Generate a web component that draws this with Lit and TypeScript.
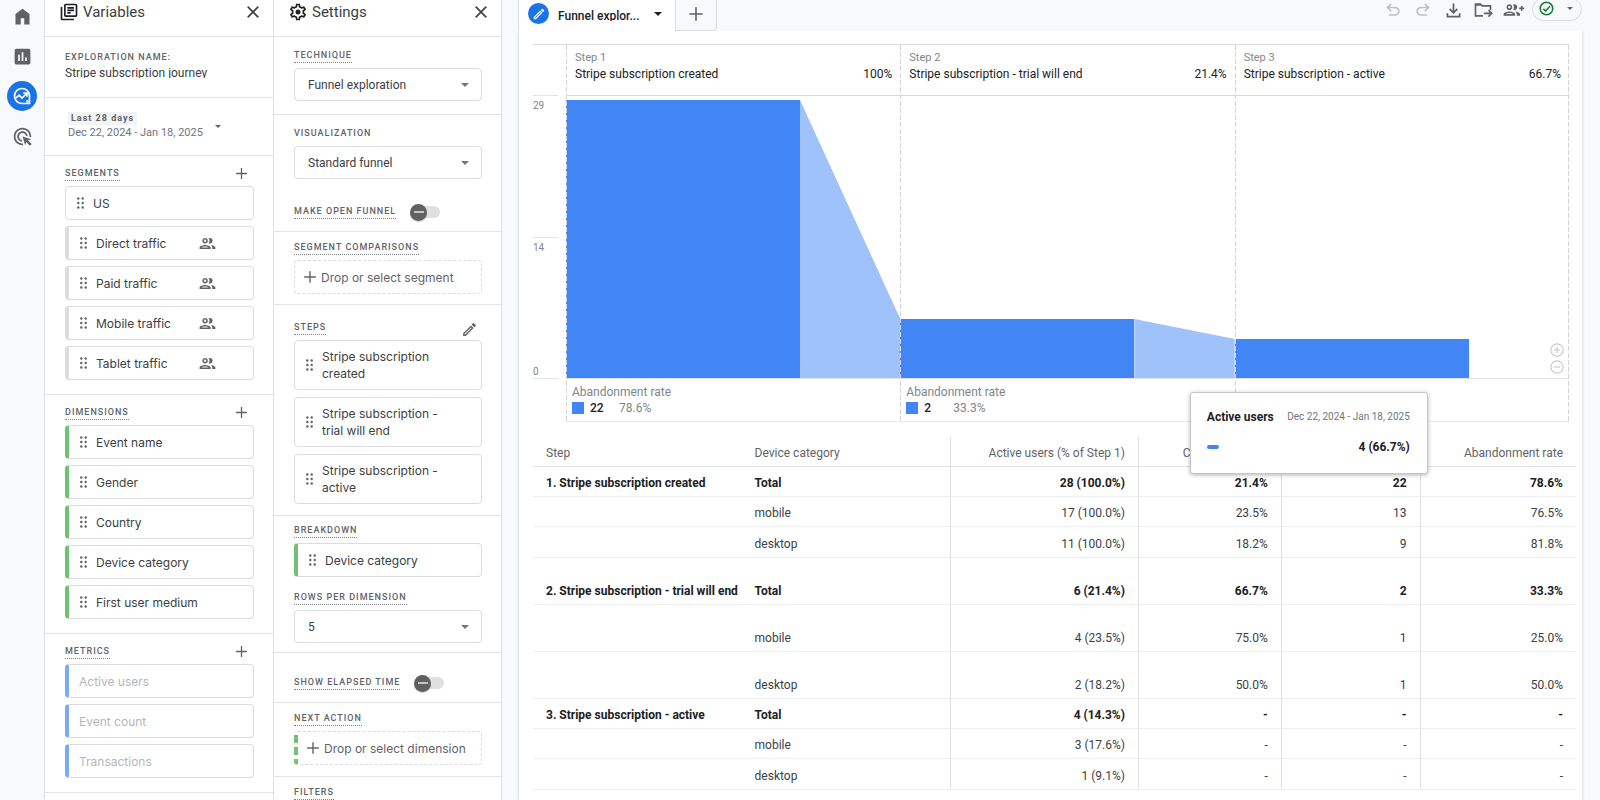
import { LitElement, html, svg, css, nothing } from "lit";
import { customElement, property, state } from "lit/decorators.js";
import { classMap } from "lit/directives/class-map.js";

const P = {
  home: "M4 21V9l8-6 8 6v12h-6v-7h-4v7z",
  reports:
    "M19 3H5c-1.1 0-2 .9-2 2v14c0 1.1.9 2 2 2h14c1.1 0 2-.9 2-2V5c0-1.1-.9-2-2-2zM9 17H7v-7h2v7zm4 0h-2V7h2v10zm4 0h-2v-4h2v4z",
  ads: "M11.71 17.99C8.53 17.84 6 15.22 6 12c0-3.31 2.69-6 6-6 3.22 0 5.84 2.53 5.99 5.71l-2.1-.63C15.48 9.31 13.89 8 12 8c-2.21 0-4 1.79-4 4 0 1.89 1.31 3.48 3.08 3.89l.63 2.1zM22 12c0 .3-.01.6-.04.9l-1.97-.59c.01-.1.01-.21.01-.31 0-4.42-3.58-8-8-8s-8 3.58-8 8 3.58 8 8 8c.1 0 .21 0 .31-.01l.59 1.97c-.3.03-.6.04-.9.04-5.52 0-10-4.48-10-10S6.48 2 12 2s10 4.48 10 10zm-3.77 4.26L22 15l-10-3 3 10 1.26-3.77 4.27 4.27 1.98-1.98-4.28-4.26z",
  library:
    "M4 6H2v14c0 1.1.9 2 2 2h14v-2H4V6zm16-4H8c-1.1 0-2 .9-2 2v12c0 1.1.9 2 2 2h12c1.1 0 2-.9 2-2V4c0-1.1-.9-2-2-2zm0 14H8V4h12v12zM10 9h8v2h-8zm0 3h4v2h-4zm0-6h8v2h-8z",
  gear: "M19.43 12.98c.04-.32.07-.64.07-.98 0-.34-.03-.66-.07-.98l2.11-1.65c.19-.15.24-.42.12-.64l-2-3.46c-.09-.16-.26-.25-.44-.25-.06 0-.12.01-.17.03l-2.49 1c-.52-.4-1.08-.73-1.69-.98l-.38-2.65C14.46 2.18 14.25 2 14 2h-4c-.25 0-.46.18-.49.42l-.38 2.65c-.61.25-1.17.59-1.69.98l-2.49-1c-.06-.02-.12-.03-.18-.03-.17 0-.34.09-.43.25l-2 3.46c-.13.22-.07.49.12.64l2.11 1.65c-.04.32-.07.65-.07.98 0 .33.03.66.07.98l-2.11 1.65c-.19.15-.24.42-.12.64l2 3.46c.09.16.26.25.44.25.06 0 .12-.01.17-.03l2.49-1c.52.4 1.08.73 1.69.98l.38 2.65c.03.24.24.42.49.42h4c.25 0 .46-.18.49-.42l.38-2.65c.61-.25 1.17-.59 1.69-.98l2.49 1c.06.02.12.03.18.03.17 0 .34-.09.43-.25l2-3.46c.12-.22.07-.49-.12-.64l-2.11-1.65zm-1.98-1.71c.04.31.05.52.05.73 0 .21-.02.43-.05.73l-.14 1.13.89.7 1.08.84-.7 1.21-1.27-.51-1.04-.42-.9.68c-.43.32-.84.56-1.25.73l-1.06.43-.16 1.13-.2 1.35h-1.4l-.19-1.35-.16-1.13-1.06-.43c-.43-.18-.83-.41-1.23-.71l-.91-.7-1.06.43-1.27.51-.7-1.21 1.08-.84.89-.7-.14-1.13c-.03-.31-.05-.54-.05-.74s.02-.43.05-.73l.14-1.13-.89-.7-1.08-.84.7-1.21 1.27.51 1.04.42.9-.68c.43-.32.84-.56 1.25-.73l1.06-.43.16-1.13.2-1.35h1.39l.19 1.35.16 1.13 1.06.43c.43.18.83.41 1.23.71l.91.7 1.06-.43 1.27-.51.7 1.21-1.07.85-.89.7.14 1.13zM12 9a3 3 0 1 0 0 6 3 3 0 0 0 0-6z",
  people:
    "M9 13.75c-2.34 0-7 1.17-7 3.5V19h14v-1.75c0-2.33-4.66-3.5-7-3.5zM4.34 17c.84-.58 2.87-1.25 4.66-1.25s3.82.67 4.66 1.25H4.34zM9 12c1.93 0 3.5-1.57 3.5-3.5S10.93 5 9 5 5.5 6.57 5.5 8.5 7.07 12 9 12zm0-5c.83 0 1.5.67 1.5 1.5S9.83 10 9 10s-1.5-.67-1.5-1.5S8.17 7 9 7zm7.04 6.81c1.16.84 1.96 1.96 1.96 3.44V19h4v-1.75c0-2.02-3.5-3.17-5.96-3.44zM15 12c1.93 0 3.5-1.57 3.5-3.5S16.93 5 15 5c-.54 0-1.04.13-1.5.35.63.89 1 1.98 1 3.15s-.37 2.26-1 3.15c.46.22.96.35 1.5.35z",
  edit: "M14.06 9.02l.92.92L5.92 19H5v-.92l9.06-9.06M17.66 3c-.25 0-.51.1-.7.29l-1.83 1.83 3.75 3.75 1.83-1.83c.39-.39.39-1.02 0-1.41l-2.34-2.34c-.2-.2-.45-.29-.71-.29zm-3.6 3.19L3 17.25V21h3.75L17.81 9.94l-3.75-3.75z",
  undo: "M7 19v-2h7.1c2.1 0 3.9-1.5 3.9-3.5S16.2 10 14.1 10H7.8l2.6 2.6L9 14 4 9l5-5 1.4 1.4L7.8 8h6.3c3.3 0 5.9 2.4 5.9 5.5S17.4 19 14.1 19z",
  redo: "M17 19v-2H9.9C7.8 17 6 15.5 6 13.5S7.8 10 9.9 10h6.3l-2.6 2.6L15 14l5-5-5-5-1.4 1.4L16.2 8H9.9C6.6 8 4 10.4 4 13.5S6.6 19 9.9 19z",
  download: "M12 16l-5-5 1.4-1.45 2.6 2.6V4h2v8.15l2.6-2.6L17 11zM4 20v-5h2v3h12v-3h2v5z",
};

const icon = (d: string, size: number) =>
  html`<svg width=${size} height=${size} viewBox="0 0 24 24" fill="currentColor" aria-hidden="true"><path d=${d}></path></svg>`;

const line = (body: unknown, size: number, width = 2) =>
  html`<svg width=${size} height=${size} viewBox="0 0 24 24" fill="none" stroke="currentColor" stroke-width=${width} aria-hidden="true">${body}</svg>`;

const plus = (size: number) => line(svg`<path d="M12 2v20M2 12h20"></path>`, size, 2.4);
const cross = line(svg`<path d="M4 4l16 16M20 4L4 20"></path>`, 16, 2.4);
const caret = (w = 8) =>
  html`<svg class="caret" width=${w} height=${w / 2} viewBox="0 0 8 4" fill="currentColor" aria-hidden="true"><path d="M0 0h8L4 4z"></path></svg>`;
const grip = html`<svg class="grip" width="7" height="12" viewBox="0 0 7 12" fill="#5f6368" aria-hidden="true">
  ${[1.5, 6, 10.5].map((y) => svg`<circle cx="1.3" cy=${y} r="1.2"></circle><circle cx="5.7" cy=${y} r="1.2"></circle>`)}
</svg>`;

const base = css`
  * { box-sizing: border-box; }
  button, input, select { font: inherit; color: inherit; margin: 0; padding: 0; border: 0; background: none; outline: 0; }
  button { cursor: pointer; }
  svg { display: block; flex: none; }
  h1, h2, h3, p { margin: 0; font-weight: 400; }
`;

const panel = css`
  :host { display: flex; flex-direction: column; background: #fff; border-right: 1px solid #dfe1e4; overflow: hidden; min-height: 0; }
  .head { display: flex; align-items: center; flex: none; height: 37px; padding: 0 12px 12px 14px; border-bottom: 1px solid #e2e3e5; }
  .head svg { color: #202124; }
  .head .x svg { color: #3c4043; }
  .head h2 { flex: 1; padding-left: 4px; font-size: 15px; line-height: 24px; color: #3c4043; }
  section { flex: none; padding: 11px 19px 14px 20px; border-bottom: 1px solid #e2e3e5; }
  .row { display: flex; align-items: flex-start; justify-content: space-between; height: 14px; margin-bottom: 5px; }
  .cap { display: block; width: max-content; height: 14px; font-size: 9px; line-height: 12px; font-weight: 500; letter-spacing: 1px; text-transform: uppercase; color: #5f6368; }
  .dot { border-bottom: 1px dotted #80868b; }
  .row button { color: #5f6368; padding-right: 6px; }
  .chips { display: grid; gap: 6px; }
`;

@customElement("field-chip")
class FieldChip extends LitElement {
  @property() label = "";
  @property() tone = "";
  @property({ type: Boolean }) people = false;
  @property({ type: Boolean }) disabled = false;
  @property({ type: Boolean }) tall = false;
  @property({ type: Boolean }) drop = false;

  static styles = [
    base,
    css`
      :host { display: block; }
      button { display: flex; align-items: center; gap: 9px; width: 100%; min-height: 34px; padding: 0 36px 0 11px; border: 1px solid #dadce0; border-radius: 4px; background: #fff; font-family: Inter, Roboto, sans-serif; font-size: 12px; line-height: 17px; color: #3c4043; text-align: left; }
      .grey { border-left: 4px solid #dadce0; }
      .green { border-left: 4px solid #71c174; }
      .blue { border-left: 4px solid #7baaf7; }
      .tall { min-height: 50px; padding: 7px 36px 7px 11px; }
      .off { padding-left: 10px; color: #b4b7ba; }
      .drop { gap: 4px; padding: 0 8px; border-style: dashed; color: #5f6368; white-space: nowrap; }
      .people { margin-left: auto; color: #5f6368; }
    `,
  ];

  render() {
    const cls = { grey: this.tone === "grey", green: this.tone === "green", blue: this.tone === "blue", tall: this.tall, off: this.disabled, drop: this.drop };
    return html`<button class=${classMap(cls)} ?disabled=${this.disabled}>
      ${this.drop ? plus(14) : this.disabled ? nothing : grip}
      <span>${this.label}</span>
      ${this.people ? html`<span class="people">${icon(P.people, 19)}</span>` : nothing}
    </button>`;
  }
}

@customElement("variables-panel")
class VariablesPanel extends LitElement {
  static styles = [
    base,
    panel,
    css`
      .name { padding: 14px 19px 19px 20px; }
      .name .cap { height: 12px; margin-bottom: 3px; }
      .clip { height: 12px; overflow: hidden; }
      .clip input { display: block; width: 100%; height: 14px; line-height: 14px; font-size: 12px; color: #3c4043; }
      .period { padding: 14px 19px 15px 23px; }
      .period button { display: flex; align-items: center; gap: 12px; text-align: left; color: #5f6368; }
      .badge { display: block; width: max-content; padding: 0 3px; background: #f1f3f4; font-size: 9px; line-height: 13px; font-weight: 700; letter-spacing: 1px; }
      .dates { display: block; padding-top: 1px; font-size: 11px; line-height: 14px; color: #70757a; }
    `,
  ];

  private group(title: string, tone: string, items: string[]) {
    return html`<section>
      <div class="row"><h3 class="cap dot">${title}</h3><button aria-label="Add ${title}">${plus(13)}</button></div>
      <div class="chips">
        ${items.map((t) => html`<field-chip label=${t} tone=${t === "US" ? "" : tone} ?people=${tone === "grey" && t !== "US"} ?disabled=${tone === "blue"}></field-chip>`)}
      </div>
    </section>`;
  }

  render() {
    return html`
      <header class="head">${icon(P.library, 20)}<h2>Variables</h2><button class="x" aria-label="Close variables">${cross}</button></header>
      <section class="name">
        <label class="cap" for="name">Exploration name:</label>
        <div class="clip"><input id="name" type="text" value="Stripe subscription journey" /></div>
      </section>
      <section class="period">
        <button><span><span class="badge">Last 28 days</span><span class="dates">Dec 22, 2024 - Jan 18, 2025</span></span>${caret(6)}</button>
      </section>
      ${this.group("Segments", "grey", ["US", "Direct traffic", "Paid traffic", "Mobile traffic", "Tablet traffic"])}
      ${this.group("Dimensions", "green", ["Event name", "Gender", "Country", "Device category", "First user medium"])}
      ${this.group("Metrics", "blue", ["Active users", "Event count", "Transactions"])}
    `;
  }
}

@customElement("settings-panel")
class SettingsPanel extends LitElement {
  static styles = [
    base,
    panel,
    css`
      .cap { margin-bottom: 5px; }
      .row .cap, .toggle .cap { margin-bottom: 0; }
      .row button { padding-right: 4px; }
      .pick { display: grid; align-items: center; color: #3c4043; }
      .pick select { grid-area: 1 / 1; width: 100%; height: 33px; padding: 0 13px; border: 1px solid #dadce0; border-radius: 4px; appearance: none; font-size: 12px; background: #fff; }
      .pick .caret { grid-area: 1 / 1; justify-self: end; margin-right: 13px; color: #757575; pointer-events: none; }
      .chips { gap: 7px; }
      .toggle { display: flex; align-items: center; gap: 14px; height: 18px; }
      .toggle input { display: grid; align-items: center; width: 30px; height: 18px; appearance: none; }
      .toggle input::before { content: ""; grid-area: 1 / 1; justify-self: end; width: 28px; height: 12px; border-radius: 6px; background: #e0e0e0; }
      .toggle input::after { content: ""; grid-area: 1 / 1; width: 17px; height: 17px; border-radius: 50%; background: linear-gradient(#c4c4c4, #c4c4c4) center / 10px 2px no-repeat #616161; box-shadow: 0 1px 1px rgba(0, 0, 0, 0.2); }
      .technique { padding-top: 12px; padding-bottom: 13px; }
      .visual { padding-top: 12px; padding-bottom: 10px; }
      .visual .toggle { margin-top: 24px; }
      .compare { padding-top: 9px; padding-bottom: 10px; }
      .steps { padding-top: 16px; padding-bottom: 11px; }
      .breakdown { padding-top: 8px; padding-bottom: 9px; }
      .breakdown field-chip { margin-bottom: 14px; }
      .elapsed { padding-top: 21px; padding-bottom: 10px; }
      .next { padding-top: 9px; padding-bottom: 11px; }
      .filters { padding-top: 9px; }
    `,
  ];

  render() {
    return html`
      <header class="head">${icon(P.gear, 20)}<h2>Settings</h2><button class="x" aria-label="Close settings">${cross}</button></header>
      <section class="technique">
        <label class="cap dot" for="technique">Technique</label>
        <div class="pick"><select id="technique"><option>Funnel exploration</option></select>${caret()}</div>
      </section>
      <section class="visual">
        <label class="cap" for="visual">Visualization</label>
        <div class="pick"><select id="visual"><option>Standard funnel</option></select>${caret()}</div>
        <div class="toggle"><label class="cap dot" for="open">Make open funnel</label><input id="open" type="checkbox" role="switch" /></div>
      </section>
      <section class="compare">
        <h3 class="cap dot">Segment comparisons</h3>
        <field-chip drop label="Drop or select segment"></field-chip>
      </section>
      <section class="steps">
        <div class="row"><h3 class="cap dot">Steps</h3><button aria-label="Edit steps">${icon(P.edit, 17)}</button></div>
        <div class="chips">
          ${["created", "- trial will end", "- active"].map((t) => html`<field-chip tall label=${"Stripe subscription " + t}></field-chip>`)}
        </div>
      </section>
      <section class="breakdown">
        <h3 class="cap dot">Breakdown</h3>
        <field-chip tone="green" label="Device category"></field-chip>
        <label class="cap dot" for="rows">Rows per dimension</label>
        <div class="pick"><select id="rows"><option>5</option></select>${caret()}</div>
      </section>
      <section class="elapsed">
        <div class="toggle"><label class="cap dot" for="elapsed">Show elapsed time</label><input id="elapsed" type="checkbox" role="switch" /></div>
      </section>
      <section class="next">
        <h3 class="cap dot">Next action</h3>
        <field-chip drop tone="green" label="Drop or select dimension"></field-chip>
      </section>
      <section class="filters"><h3 class="cap dot">Filters</h3></section>
    `;
  }
}

interface Step { name: string; rate: string; height: number; lost?: string; lostRate?: string }

const STEPS: Step[] = [
  { name: "Stripe subscription created", rate: "100%", height: 278, lost: "22", lostRate: "78.6%" },
  { name: "Stripe subscription - trial will end", rate: "21.4%", height: 59, lost: "2", lostRate: "33.3%" },
  { name: "Stripe subscription - active", rate: "66.7%", height: 39 },
];

@customElement("funnel-chart")
class FunnelChart extends LitElement {
  static styles = [
    base,
    css`
      :host { display: flex; position: relative; border-top: 1px solid #dadce0; }
      .axis { flex: none; width: 33px; padding: 50px 8px 0 0; font-size: 10px; color: #80868b; }
      .axis div { height: 142px; padding-top: 4px; border-top: 1px solid #e2e3e5; line-height: 12px; display: flex; flex-direction: column; justify-content: space-between; }
      .axis div + div { border-bottom: 1px solid #e2e3e5; }
      .cols { flex: 1; display: grid; grid-template-columns: repeat(3, 1fr); border-bottom: 1px solid #e8eaed; }
      .col { position: relative; min-width: 0; }
      .col::before, .col:last-child::after { content: ""; position: absolute; top: 0; bottom: 0; left: 0; z-index: 1; width: 1px; background: repeating-linear-gradient(#d2d4d7 0 5px, transparent 5px 7px); }
      .col:last-child::after { left: auto; right: 0; }
      .top { height: 51px; padding: 6px 8px 0 9px; border-bottom: 1px solid #d8dadd; color: #202124; font-size: 12px; line-height: 16px; }
      .top small { display: block; font-size: 11px; line-height: 14px; color: #80868b; margin-bottom: 1px; }
      .top div { display: flex; justify-content: space-between; }
      .plot { display: flex; align-items: flex-end; height: 283px; border-bottom: 1px solid #e2e3e5; }
      .bar { width: 70%; background: #4285f4; }
      .drop { width: 30%; background: #a0c2fa; }
      .foot { height: 42px; padding: 5px 0 0 6px; font-size: 12px; line-height: 16px; color: #80868b; }
      .foot div { display: flex; align-items: center; }
      .foot i { width: 12px; height: 12px; margin-right: 6px; background: #4285f4; }
      .foot b { width: 29px; font-weight: 500; color: #202124; }
      .zoom { display: grid; gap: 3px; margin: 0 5px 4px auto; color: #c8cacd; }
      .zoom button { display: block; }
    `,
  ];

  render() {
    return html`
      <div class="axis"><div>29</div><div><span>14</span><span>0</span></div></div>
      <div class="cols">
        ${STEPS.map((s, i) => {
          const next = STEPS[i + 1];
          return html`<div class="col">
            <div class="top"><small>Step ${i + 1}</small><div><span>${s.name}</span><span>${s.rate}</span></div></div>
            <div class="plot">
              <div class="bar" style="height:${s.height}px"></div>
              ${next
                ? html`<div class="drop" style="height:${s.height}px;clip-path:polygon(0 0,100% ${s.height - next.height}px,100% 100%,0 100%)"></div>`
                : html`<div class="zoom">
                    <button aria-label="Zoom in">${line(svg`<circle cx="12" cy="12" r="10.5"></circle><path d="M12 6.5v11M6.5 12h11"></path>`, 14)}</button>
                    <button aria-label="Zoom out">${line(svg`<circle cx="12" cy="12" r="10.5"></circle><path d="M6.5 12h11"></path>`, 14)}</button>
                  </div>`}
            </div>
            <div class="foot">
              ${s.lost ? html`<p>Abandonment rate</p><div><i></i><b>${s.lost}</b><span>${s.lostRate}</span></div>` : nothing}
            </div>
          </div>`;
        })}
      </div>
      <slot></slot>
    `;
  }
}

const ROWS: [string, string[], boolean?][] = [
  ["1. Stripe subscription created", ["Total", "28 (100.0%)", "21.4%", "22", "78.6%"]],
  ["", ["mobile", "17 (100.0%)", "23.5%", "13", "76.5%"]],
  ["", ["desktop", "11 (100.0%)", "18.2%", "9", "81.8%"]],
  ["2. Stripe subscription - trial will end", ["Total", "6 (21.4%)", "66.7%", "2", "33.3%"], true],
  ["", ["mobile", "4 (23.5%)", "75.0%", "1", "25.0%"], true],
  ["", ["desktop", "2 (18.2%)", "50.0%", "1", "50.0%"], true],
  ["3. Stripe subscription - active", ["Total", "4 (14.3%)", "-", "-", "-"]],
  ["", ["mobile", "3 (17.6%)", "-", "-", "-"]],
  ["", ["desktop", "1 (9.1%)", "-", "-", "-"]],
];

@customElement("app-root")
class AppRoot extends LitElement {
  @state() private section = 2;

  static styles = [
    base,
    css`
      :host { display: grid; grid-template-columns: 45px 229px 228px minmax(0, 1fr); height: 100vh; overflow: hidden; background: #f8f9fb; font-family: Roboto, Arial, sans-serif; font-size: 12px; color: #3c4043; }
      nav { display: flex; flex-direction: column; align-items: center; gap: 10px; padding-top: 1px; border-right: 1px solid #dfe1e4; color: #5f6368; }
      nav button { display: grid; place-items: center; width: 30px; height: 30px; border-radius: 50%; }
      nav .on { background: #1a73e8; color: #fff; }
      main { display: flex; flex-direction: column; min-width: 0; padding: 0 18px 0 17px; }
      .bar { display: flex; flex: none; height: 31px; align-items: flex-start; }
      .tab { display: flex; align-items: center; width: 156px; height: 31px; padding: 0 13px 4px 9px; background: #fff; box-shadow: -1px 0 1px #dfe1e4; color: #202124; font-weight: 500; }
      .pen { display: grid; place-items: center; width: 21px; height: 21px; margin-right: 9px; border-radius: 50%; background: #1a73e8; color: #fff; }
      .tab .text { flex: 1; height: 12px; line-height: 14px; overflow: hidden; text-align: left; margin-top: 3px; }
      .add { display: grid; place-items: center; width: 42px; height: 31px; padding-bottom: 3px; border: 1px solid #dadce0; border-top: 0; border-radius: 0 0 4px 0; color: #5f6368; }
      .tools { display: flex; align-items: center; margin-left: auto; height: 20px; color: #5f6368; }
      .tools > button { display: grid; place-items: center; width: 30px; height: 20px; }
      .tools > button:disabled { color: #bdc1c6; }
      .tools > .status { display: flex; gap: 13px; width: 50px; height: 23px; padding: 0 9px 1px 6px; margin: 0 0 2px 4px; border: 1px solid #dadce0; border-radius: 12px; }
      .status svg:first-child { color: #188038; }
      .card { flex: 1; padding: 13px 6px 0 14px; background: #fff; box-shadow: 0 1px 3px rgba(60, 64, 67, 0.25); clip-path: inset(0 -6px -6px -6px); min-height: 0; }
      funnel-chart { margin-right: 7px; }
      .tip { position: absolute; top: 347px; left: 63.4%; z-index: 2; width: 238px; height: 82px; padding: 16px 17px 16px 16px; border: 1px solid #c4c7ca; border-radius: 3px; background: #fff; box-shadow: 0 1px 4px rgba(0, 0, 0, 0.3); line-height: 16px; color: #202124; }
      .tip div { display: flex; align-items: center; justify-content: space-between; margin-bottom: 14px; }
      .tip span { font-size: 10px; color: #70757a; }
      .tip i { width: 12px; height: 4px; border-radius: 2px; background: #4285f4; }
      table { width: 100%; margin-top: 15px; border-collapse: separate; border-spacing: 0; table-layout: fixed; }
      th, td { height: 30px; padding: 0 13px 5px; border-bottom: 1px solid #eceef0; text-align: right; vertical-align: bottom; line-height: 16px; white-space: nowrap; font-weight: 400; }
      tbody tr:nth-child(3n) > * { height: 31px; }
      thead th { color: #5f6368; border-bottom-color: #dfe1e4; }
      th:nth-child(-n + 2), td:nth-child(-n + 2) { text-align: left; }
      td:nth-child(n + 3), thead th:nth-child(n + 3) { border-left: 1px solid #dfe1e4; }
      tbody .loose.loose > * { height: 47px; }
      .total > * { font-weight: 700; color: #202124; }
      .c1, .c2 { width: 20%; }
      .c3 { width: 18%; }
      .c4 { width: 13.7%; }
      .c5 { width: 13.3%; }
    `,
  ];

  private navItem(i: number, name: string, body: unknown) {
    return html`<button class=${classMap({ on: this.section === i })} aria-label=${name} @click=${() => (this.section = i)}>${body}</button>`;
  }

  render() {
    return html`
      <nav>
        ${this.navItem(0, "Home", icon(P.home, 21))}
        ${this.navItem(1, "Reports", icon(P.reports, 21))}
        ${this.navItem(2, "Explore", line(svg`<path d="M12 3a9 9 0 1 0 0 18h9v-9a9 9 0 0 0-9-9z"></path><path d="M4 15l4.500-4 3.500 3.500L17.500 9M13.500 8.500h4.500v4.500"></path><circle cx="18.500" cy="18.500" r=".6"></circle>`, 20, 2))}
        ${this.navItem(3, "Advertising", icon(P.ads, 21))}
      </nav>
      <variables-panel></variables-panel>
      <settings-panel></settings-panel>
      <main>
        <div class="bar">
          <button class="tab"><span class="pen">${icon(P.edit, 14)}</span><span class="text">Funnel explor...</span>${caret()}</button>
          <button class="add" aria-label="Add tab">${plus(16)}</button>
          <div class="tools">
            <button disabled aria-label="Undo">${icon(P.undo, 20)}</button>
            <button disabled aria-label="Redo">${icon(P.redo, 20)}</button>
            <button aria-label="Download">${icon(P.download, 21)}</button>
            <button aria-label="Move">${line(svg`<path d="M12 19H3V5h6l2 2h10v5M3 6h7"></path><path d="M13 16h9M18.500 12l4 4-4 4"></path>`, 20)}</button>
            <button aria-label="Share"><svg width="23" height="20" viewBox="0 0 28 24" fill="currentColor" aria-hidden="true"><path d=${P.people}></path><path d="M21 9h2V7h2v2h2v2h-2v2h-2v-2h-2z"></path></svg></button>
            <button class="status" aria-label="Status">${line(svg`<circle cx="12" cy="12" r="10"></circle><path d="M7 12.500l3.500 3.500 7-7.500"></path>`, 15, 2.6)}${caret(6)}</button>
          </div>
        </div>
        <div class="card">
          <funnel-chart>
            <div class="tip" role="tooltip">
              <div><b>Active users</b><span>Dec 22, 2024 - Jan 18, 2025</span></div>
              <div><i></i><b>4 (66.7%)</b></div>
            </div>
          </funnel-chart>
          <table>
            <colgroup><col class="c1" /><col class="c2" /><col class="c3" /><col class="c4" /><col class="c5" /><col /></colgroup>
            <thead>
              <tr>${["Step", "Device category", "Active users (% of Step 1)", "Completion rate", "Abandonments", "Abandonment rate"].map((t) => html`<th scope="col">${t}</th>`)}</tr>
            </thead>
            <tbody>
              ${ROWS.map(
                ([step, cells, loose]) => html`<tr class=${classMap({ loose: !!loose, total: !!step })}>
                  <th scope="row">${step}</th>${cells.map((c) => html`<td>${c}</td>`)}
                </tr>`
              )}
            </tbody>
          </table>
        </div>
      </main>
    `;
  }
}
